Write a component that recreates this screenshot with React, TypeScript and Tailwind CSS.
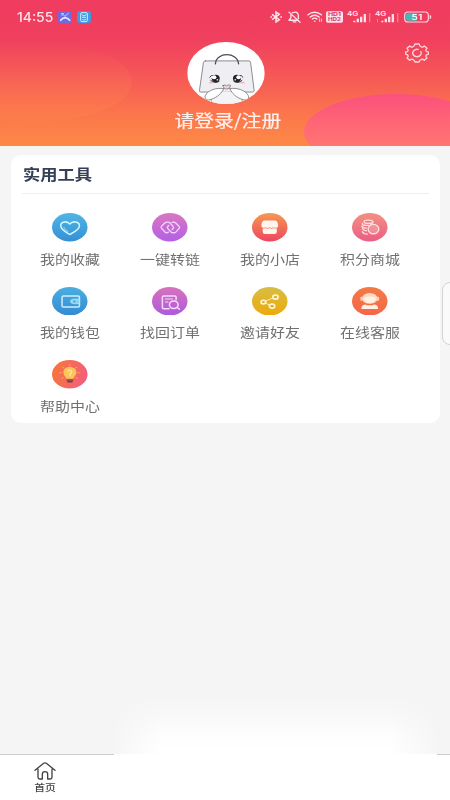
import type { ReactNode } from "react";

const cjk = "font-['Noto_Sans_CJK_SC',sans-serif]";

function Disc({ id, from, to, diagonal, children }: { id: string; from: string; to: string; diagonal?: boolean; children: ReactNode }) {
  return (
    <svg viewBox="0 0 106 85" className="h-[28.5px] w-[35.5px]" fill="none" strokeLinecap="round" strokeLinejoin="round">
      <defs>
        <linearGradient id={id} x1="0" y1="0" x2={diagonal ? "1" : "0"} y2={diagonal ? "0.3" : "1"}>
          <stop stopColor={from} />
          <stop offset="1" stopColor={to} />
        </linearGradient>
      </defs>
      <ellipse cx="53" cy="42.5" rx="53" ry="42.5" fill={`url(#${id})`} />
      {children}
    </svg>
  );
}

const tools: { label: string; icon: ReactNode }[] = [
  {
    label: "我的收藏",
    icon: (
      <Disc id="heart" from="#4fb6e6" to="#3590d4">
        <path d="M53 64C42 58 26 50 26 38C26 26 45 22 53 33C61 22 82 26 82 38C82 50 64 58 53 64Z" stroke="#d3f6ff" strokeWidth="4.5" />
        <path d="M35 43Q38 51 48 55" stroke="#8bd8f5" strokeWidth="3" />
      </Disc>
    ),
  },
  {
    label: "一键转链",
    icon: (
      <Disc id="link" from="#d977c0" to="#b45fe6">
        <path d="M49 57L44 59Q41 59 38 56L28 45Q26 42 29 39L39 29Q41 27 45 27H48Q51 27 54 30L63 40Q66 43 63 46L60 49" stroke="#f3d5fa" strokeWidth="4" />
        <path d="M60 28L65 27Q68 27 71 30L81 40Q84 43 81 46L71 57Q69 59 65 59H62Q59 59 56 56L47 46Q44 43 47 40L50 37" stroke="#f3d5fa" strokeWidth="4" />
      </Disc>
    ),
  },
  {
    label: "我的小店",
    icon: (
      <Disc id="shop" from="#f49a50" to="#ee4560">
        <path d="M36 22H70Q76 23 78 35V40Q78 43 74 45V57Q74 63 67 63H39Q32 63 32 57V45Q28 43 28 39V34Q30 23 36 22Z" fill="#fff4ee" />
        <path d="M30 44Q35 48 40 44Q46 48 52 44Q58 48 64 44Q70 48 75 44" stroke="#ef6556" strokeWidth="2" />
      </Disc>
    ),
  },
  {
    label: "积分商城",
    icon: (
      <Disc id="coins" from="#f39083" to="#ea5e83">
        <g stroke="#ffe0dd" strokeWidth="4">
          <ellipse cx="49" cy="26" rx="13" ry="5" />
          <path d="M31 31Q31 37 42 37H50M29 39Q32 45 43 45M31 47Q34 53 43 53M31 56Q34 63 46 63" />
          <path d="M62 26Q63 31 55 33" />
          <ellipse cx="64" cy="48" rx="16" ry="14" fill="#ffffff35" />
        </g>
      </Disc>
    ),
  },
  {
    label: "我的钱包",
    icon: (
      <Disc id="wallet" from="#4aaee0" to="#358bd2">
        <rect x="30" y="27" width="52" height="33" rx="4" stroke="#c9efff" strokeWidth="4.5" />
        <path d="M81 36H65Q55 37 55 43T65 50H81Z" fill="#8fd3f3" stroke="#b3e7fb" strokeWidth="2" />
        <ellipse cx="67" cy="43" rx="3" ry="2.5" fill="#3d96d2" />
      </Disc>
    ),
  },
  {
    label: "找回订单",
    icon: (
      <Disc id="order" from="#d873bc" to="#ad58df">
        <g stroke="#f5dcfb" strokeWidth="4.5">
          <path d="M72 38V30Q72 27 68 27H35Q31 27 31 30V61Q31 65 35 65H51" />
          <path d="M40 36H61M40 45H48" strokeWidth="3" />
          <ellipse cx="65" cy="53" rx="13" ry="11" />
          <path d="M74 61L82 66" />
        </g>
      </Disc>
    ),
  },
  {
    label: "邀请好友",
    icon: (
      <Disc id="share" from="#d7bd45" to="#edaa0b">
        <g stroke="#fff6cf" strokeWidth="5">
          <path d="M36 44L66 31M36 46L57 56" strokeWidth="2.5" />
          <ellipse cx="34" cy="45" rx="7" ry="5.5" fill="#dfae2a" />
          <ellipse cx="70" cy="30" rx="8" ry="6" fill="#dfae2a" />
          <ellipse cx="60" cy="57" rx="8" ry="6" fill="#e4a61e" />
        </g>
      </Disc>
    ),
  },
  {
    label: "在线客服",
    icon: (
      <Disc id="service" from="#f37a45" to="#f6664a">
        <ellipse cx="53" cy="34" rx="23" ry="16" fill="#ffd9c3" />
        <rect x="25" y="29" width="7" height="12" rx="3" fill="#ffd0b6" />
        <rect x="74" y="29" width="7" height="12" rx="3" fill="#ffd0b6" />
        <path d="M34 33Q53 24 72 33Q69 47 53 48Q37 47 34 33Z" fill="#fff0e4" />
        <path d="M28 66Q28 53 39 52Q53 57 67 52Q78 53 78 66Z" fill="#fff0e4" />
      </Disc>
    ),
  },
  {
    label: "帮助中心",
    icon: (
      <Disc id="help" from="#f67835" to="#f45f77" diagonal>
        <path d="M53 13V17M32 21L36 24M74 21L70 24M23 38H29M77 38H83M30 55L34 52M76 55L72 52" stroke="#f8a64c" strokeWidth="3" />
        <path d="M53 21C41 21 34 28 34 37C34 45 40 49 43 56H63C66 49 73 45 73 37C73 28 65 21 53 21Z" fill="#fcc45b" />
        <path d="M48 35Q48 30 53 30T59 35Q59 39 54 41V47" stroke="#fff0a5" strokeWidth="3" />
        <path d="M45 60H62M47 65H60" stroke="#74403d" strokeWidth="4" />
      </Disc>
    ),
  },
];

function Signal({ second }: { second?: boolean }) {
  return (
    <svg viewBox="0 0 72 36" className="h-3 w-6 overflow-visible" fill="#ffe2e9">
      <text x="0" y="14" fontSize="19" fontWeight="600" fontFamily="Inter, sans-serif" textLength="34" lengthAdjust="spacingAndGlyphs">4G</text>
      <path d="M19 29h6v5h-6zM29 23h7v11h-7zM39 17h7v17h-7zM50 9h7v25h-7z" />
      <path d="M66 7h4v27h-4z" opacity="0.4" />
      {second && <path d="M6 24h3v10H6z" opacity="0.4" />}
    </svg>
  );
}

function StatusBar() {
  return (
    <div className="flex h-[34px] items-center justify-between pl-[17px] pr-[18px]">
      <div className="flex items-center">
        <span className="w-[41px] whitespace-nowrap font-['Inter',sans-serif] text-[13px] font-medium leading-4 text-[#ffe4ea]">
          <span className="inline-block origin-left scale-x-[1.07]">14:55</span>
        </span>
        <svg viewBox="0 0 42 36" className="h-3 w-3.5" fill="none" strokeLinecap="round">
          <rect width="42" height="36" rx="8" fill="#7467df" />
          <path d="M8 28Q13 21 21 20Q30 21 35 28" stroke="#ddeaff" strokeWidth="5" />
          <path d="M12 8L21 16L32 6M12 7V13M12 8H17" stroke="#a7d4ff" strokeWidth="3" />
        </svg>
        <svg viewBox="0 0 42 36" className="ml-[5px] h-3 w-3.5" fill="none">
          <rect width="42" height="36" rx="8" fill="#4595df" />
          <rect x="11" y="5" width="20" height="27" rx="4" stroke="#c8f3ff" strokeWidth="3" />
          <path d="M15 11L21 15L28 11M15 19H27M16 26Q21 29 27 25" stroke="#c8f3ff" strokeWidth="3" />
        </svg>
      </div>
      <div className="flex items-center">
        <svg viewBox="0 0 36 36" className="h-3 w-3" fill="none" stroke="#ffe4eb" strokeWidth="4.5">
          <path d="M6 10L28 26L18 33V3L28 10L6 26" />
          <path d="M1 18H6M31 18H36" />
        </svg>
        <svg viewBox="0 0 40 36" className="ml-1.5 h-3 w-[13px]" fill="none" stroke="#ffe4eb" strokeWidth="4" strokeLinecap="round" strokeLinejoin="round">
          <path d="M3 3L37 34M9 10V20L3 28H29M13 5Q30 -2 32 13V23M16 33H24" />
        </svg>
        <svg viewBox="0 0 50 36" className="ml-[6px] h-3 w-4" fill="none" stroke="#ffe4eb" strokeWidth="4.5" strokeLinecap="round">
          <path d="M3 11Q23 -5 45 11M10 18Q24 7 38 18M17 24Q24 19 31 24" />
          <ellipse cx="24" cy="31" rx="3" ry="2" fill="#ffe4eb" stroke="none" />
          <path d="M39 24V32M45 24V32" strokeWidth="2.5" />
        </svg>
        <svg viewBox="0 0 51 36" className="ml-[3px] h-3 w-[17px]">
          <rect y="1" width="51" height="34" rx="5" fill="#ffe0e8" />
          <g fill="#d93563" fontFamily="Inter, sans-serif" fontWeight="700" fontSize="15">
            <text x="6" y="16" textLength="39" lengthAdjust="spacingAndGlyphs">HD1</text>
            <text x="6" y="31" textLength="39" lengthAdjust="spacingAndGlyphs">HD2</text>
          </g>
        </svg>
        <div className="ml-1 flex gap-1">
          <Signal />
          <Signal second />
        </div>
        <svg viewBox="0 0 84 36" className="ml-[5px] h-3 w-7">
          <rect x="2" y="3" width="71" height="30" rx="10" fill="none" stroke="#ffd6df" strokeWidth="3.5" />
          <path d="M12 7H38V29H12Q6 29 6 23V13Q6 7 12 7Z" fill="#49b9b7" />
          <path d="M77 12Q82 12 82 18T77 24Z" fill="#ffd6df" />
          <text x="22" y="26" fontFamily="Inter, sans-serif" fontWeight="500" fontSize="24" fill="#fff" textLength="33" lengthAdjust="spacingAndGlyphs">51</text>
        </svg>
      </div>
    </div>
  );
}

function Avatar() {
  return (
    <svg viewBox="0 0 234 187" className="h-[62px] w-[78px]" fill="none" strokeLinecap="round" strokeLinejoin="round">
      <defs>
        <clipPath id="face">
          <ellipse cx="117" cy="93.5" rx="117" ry="93.5" />
        </clipPath>
      </defs>
      <g clipPath="url(#face)">
        <path d="M0 0H234V187H0Z" fill="#fff" />
        <path d="M55 57H186Q190 57 191 61L202 146Q202 151 197 151H41Q36 151 37 146L49 61Q50 57 55 57Z" fill="#efeef2" stroke="#77757a" strokeWidth="2.5" />
        <path d="M75 149H165L184 187H55Z" fill="#f4f3f5" />
        <path d="M85 66C87 29 152 29 155 66" stroke="#514d53" strokeWidth="4" />
        <path d="M68 106Q73 98 79 101M71 116Q83 127 96 119" stroke="#333" strokeWidth="3" />
        <ellipse cx="86" cy="110" rx="12" ry="11" fill="#252326" />
        <ellipse cx="81" cy="106" rx="7" ry="6" fill="#fff" />
        <ellipse cx="91" cy="114" rx="3" ry="2.5" fill="#ddd" />
        <path d="M168 106Q163 98 157 101M165 116Q154 127 141 119" stroke="#333" strokeWidth="3" />
        <ellipse cx="150" cy="110" rx="12" ry="11" fill="#252326" />
        <ellipse cx="155" cy="106" rx="7" ry="6" fill="#fff" />
        <ellipse cx="145" cy="114" rx="3" ry="2.5" fill="#ddd" />
        <path d="M67 123H75M162 123H172" stroke="#ee9ba9" strokeWidth="3" />
        <path d="M108 131Q114 127 119 132Q125 127 131 131Q130 142 119 142Q109 142 108 131Z" fill="#ead6db" stroke="#68656a" strokeWidth="2" />
        <path d="M110 141C89 136 62 146 55 161C50 174 60 177 72 173C89 168 104 155 110 141Z" fill="#fff" stroke="#79777a" strokeWidth="2.5" />
        <path d="M129 141C149 136 176 146 184 161C189 174 178 177 166 173C149 168 134 155 129 141Z" fill="#fff" stroke="#79777a" strokeWidth="2.5" />
        <path d="M73 174V187M166 174V187" stroke="#88868a" strokeWidth="2" />
      </g>
    </svg>
  );
}

function Header() {
  return (
    <header className="relative h-[146px] overflow-hidden bg-[linear-gradient(180deg,#ef3b5f_0%,#f0405e_27%,#f55458_49%,#fb764c_78%,#fe8946_100%)]">
      <div className="absolute -left-[66px] top-[42px] h-20 w-[198px] rounded-[50%] bg-[linear-gradient(180deg,#ff995000_0%,#ff90502b_55%,#ff86484d_100%)]" />
      <div className="absolute left-[304px] top-[94px] h-[76px] w-[184px] rounded-[50%] bg-[linear-gradient(180deg,#fb507c_0%,#ff6875_42%,#ff7571_70%)]" />
      <div className="relative">
        <StatusBar />
        <div className="grid grid-cols-[1fr_78px_1fr] items-start pt-2 pl-[2px] pr-[21px]">
          <span />
          <div className="ml-[10px] w-[78px]"><Avatar /></div>
          <svg viewBox="0 0 72 60" className="mt-px h-5 w-6 justify-self-end" fill="none" stroke="#ffd5dd" strokeWidth="4" strokeLinejoin="round">
            <path d="M30 3H42Q44 10 49 12Q54 13 58 9L66 16Q61 21 63 24Q65 27 70 27V34Q65 34 63 37Q61 41 66 45L58 52Q54 48 49 49Q44 51 42 57H30Q28 51 23 49Q18 48 14 52L6 45Q11 41 9 37Q7 34 2 34V27Q7 27 9 24Q11 21 6 16L14 9Q18 13 23 12Q28 10 30 3Z" />
            <path d="M47 24Q51 30 47 36Q42 42 34 41Q24 39 23 31Q23 22 33 19Q37 18 41 20" />
          </svg>
        </div>
        <div className={`${cjk} flex justify-center pl-[6px] pt-1 text-[17px] leading-6 text-[#fff0ee] [-webkit-text-stroke:0.2px_#fff0ee]`}>
          <span className="inline-block scale-x-[1.165] whitespace-nowrap">请登录/注册</span>
        </div>
      </div>
    </header>
  );
}

export default function App() {
  return (
    <div className={`${cjk} relative flex h-[800px] w-[450px] flex-col overflow-hidden bg-[#f5f5f5]`}>
      <Header />
      <main className="flex-1 pl-[11px] pr-2.5 pt-[9px]">
        <section className="h-[268px] rounded-[10px] bg-white px-[11px]">
          <h1 className="flex h-[39px] items-center border-b border-[#eeeeee] pl-px text-[15px] font-bold leading-5 text-[#344055]">
            <span className="inline-block origin-left scale-x-[1.15]">实用工具</span>
          </h1>
          <div className="-mx-[2px] mt-[19px] grid w-[400px] grid-cols-4">
            {tools.map((tool) => (
              <div key={tool.label} className="flex h-[73.5px] flex-col items-center">
                {tool.icon}
                <span className="mt-[7px] inline-block scale-x-[1.15] whitespace-nowrap text-[13px] leading-5 text-[#707070]">{tool.label}</span>
              </div>
            ))}
          </div>
        </section>
      </main>
      <nav className="flex h-[46px] border-t border-[#cccccc] bg-white pl-[33px]">
        <div className="flex w-6 flex-col items-center pt-[7px]">
          <svg viewBox="0 0 66 54" className="h-[18px] w-[22px]" fill="none" stroke="#424242" strokeWidth="4" strokeLinecap="round" strokeLinejoin="round">
            <path d="M3 25L29 4Q33 1 37 4L63 25M12 20V46Q12 51 17 51H25V36Q25 29 33 29T41 36V51H49Q54 51 54 46V20" />
          </svg>
          <span className="mt-px inline-block scale-x-[1.2] whitespace-nowrap text-[9px] font-medium leading-[13px] text-[#444444]">首页</span>
        </div>
      </nav>
      <div className="absolute left-[113px] top-[694px] h-[61px] w-[325px] bg-[linear-gradient(180deg,transparent_0%,#ffffff60_35%,#ffffffd0_70%,white_100%)] [mask-image:linear-gradient(90deg,transparent_0%,#00000050_3%,black_15%,black_85%,#00000050_97%,transparent_100%)]" />
      <div className="absolute left-[114px] top-[754px] h-[46px] w-[323px] bg-white" />
      <div className="absolute -right-2 top-[282px] h-[63px] w-4 rounded-lg border border-[#d4d4d4] bg-[#fafafa]" />
    </div>
  );
}
